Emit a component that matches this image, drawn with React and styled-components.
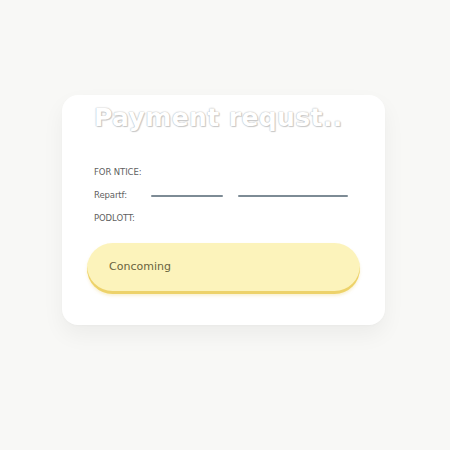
import React from 'react';
import styled, { createGlobalStyle } from 'styled-components';

const GlobalStyle = createGlobalStyle`
  html, body {
    margin: 0;
    padding: 0;
    background: #f8f8f6;
  }
  body {
    font-family: 'Open Sans', 'Liberation Sans', sans-serif;
  }
`;

const Page = styled.div`
  width: 450px;
  height: 450px;
  display: flex;
  justify-content: flex-start;
  align-items: flex-start;
  padding: 95px 0 0 62px;
  box-sizing: border-box;
`;

const Card = styled.div`
  width: 323px;
  height: 230px;
  box-sizing: border-box;
  background: #ffffff;
  border-radius: 16px;
  box-shadow: 0 10px 22px rgba(0, 0, 0, 0.05), 0 1px 3px rgba(0, 0, 0, 0.02);
  padding: 5px 25px 0 25px;
  display: flex;
  flex-direction: column;
`;

const Title = styled.h1`
  margin: 0 0 0 7px;
  font-family: 'DejaVu Sans', sans-serif;
  font-weight: 700;
  font-size: 25px;
  line-height: 35px;
  color: #ffffff;
  letter-spacing: 0.4px;
  white-space: nowrap;
  text-shadow: 0 0 1px #b4b4b4, 0 0 2px #cdcdcd, 1px 1px 1px #cacaca;
`;

const Fields = styled.div`
  display: flex;
  flex-direction: column;
  gap: 8px;
  margin: 29px 0 0 7px;
`;

const Row = styled.div`
  display: flex;
  align-items: center;
  height: 15px;
`;

const Label = styled.span`
  font-family: 'DejaVu Sans', sans-serif;
  font-size: 8.5px;
  color: #5f5f5f;
  width: 57px;
  letter-spacing: -0.1px;
`;

const Line = styled.span`
  display: block;
  height: 2px;
  width: ${(p) => p.w}px;
  margin-right: ${(p) => p.gap || 0}px;
  background: #7d8b95;
  border-radius: 1px;
  margin-top: 2px;
`;

const Button = styled.button`
  margin-top: 18px;
  height: 51px;
  width: 273px;
  border: none;
  border-radius: 26px;
  background: #fcf3bb;
  box-shadow: inset 0 -3px 0 #edd26a, 0 2px 3px rgba(230, 200, 90, 0.25);
  text-align: left;
  padding: 0 0 5px 22px;
  font-family: 'DejaVu Sans', sans-serif;
  font-size: 11px;
  color: #6a6440;
  cursor: pointer;
`;

export default function App() {
  return (
    <>
      <GlobalStyle />
      <Page>
        <Card>
          <Title>Payment requst..</Title>
          <Fields>
            <Row>
              <Label>FOR NTICE:</Label>
            </Row>
            <Row>
              <Label>Repartf:</Label>
              <Line w={72} gap={15} />
              <Line w={110} />
            </Row>
            <Row>
              <Label>PODLOTT:</Label>
            </Row>
          </Fields>
          <Button>Concoming</Button>
        </Card>
      </Page>
    </>
  );
}
